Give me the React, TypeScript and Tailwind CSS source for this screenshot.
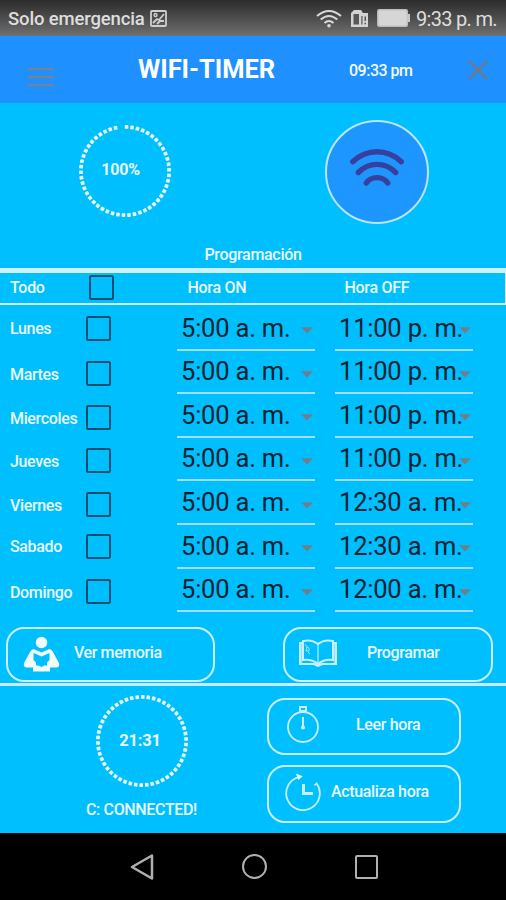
import React from "react";

const DAYS = [
  { name: "Lunes", row: "mt-[11px]", label: "pt-px", on: "5:00 a. m.", off: "11:00 p. m." },
  { name: "Martes", row: "mt-[20px]", label: "pt-[3px]", on: "5:00 a. m.", off: "11:00 p. m." },
  { name: "Miercoles", row: "mt-[19px]", label: "pt-[3px]", on: "5:00 a. m.", off: "11:00 p. m." },
  { name: "Jueves", row: "mt-[18px]", label: "pt-[3px]", on: "5:00 a. m.", off: "11:00 p. m." },
  { name: "Viernes", row: "mt-[18.5px]", label: "pt-[3px]", on: "5:00 a. m.", off: "12:30 a. m." },
  { name: "Sabado", row: "mt-[17.5px]", label: "pt-px", on: "5:00 a. m.", off: "12:30 a. m." },
  { name: "Domingo", row: "mt-[20px]", label: "pt-[3px]", on: "5:00 a. m.", off: "12:00 a. m." },
];

function DotRing({ label, labelClass, start, count }: { label: string; labelClass: string; start: number; count: number }) {
  return (
    <div className="grid h-[94px] w-[94px] place-items-center">
      <svg viewBox="0 0 94 94" className="col-start-1 row-start-1 h-[94px] w-[94px]">
        {Array.from({ length: count }, (_, i) => (
          <rect
            key={i}
            x="45.2"
            y="1"
            width="3.6"
            height="3.8"
            rx="0.6"
            fill="#e6f8ff"
            transform={`rotate(${start + i * 7.2} 47 47)`}
          />
        ))}
      </svg>
      <span className={`col-start-1 row-start-1 leading-none font-bold ${labelClass}`}>{label}</span>
    </div>
  );
}

function Check() {
  return <span className="block h-[25px] w-[25px] shrink-0 rounded-[2.5px] border-2 border-[#07506f]" />;
}

function TimeSelect({ value }: { value: string }) {
  return (
    <div className="flex h-[43.6px] w-[138px] items-center justify-between border-b-2 border-[#a5dcfb] pl-1 pr-[2px]">
      <span className="w-[118px] pt-px text-[25.5px] leading-none tracking-[-0.2px] whitespace-nowrap text-[#08222e]">{value}</span>
      <svg viewBox="0 0 12 7" className="mt-[6px] h-[7px] w-3 shrink-0">
        <path d="M0 0.3h12L6 6.6z" fill="#6f7f88" />
      </svg>
    </div>
  );
}

export default function App() {
  return (
    <div className="flex h-[900px] w-[506px] flex-col overflow-hidden bg-[#00bfff] font-[Roboto,sans-serif] text-[#e9f9ff]">
      <div className="flex h-9 shrink-0 items-center bg-linear-to-b from-[#2c2c2c] to-[#707070] pt-[2px] pl-2 text-[#dedede]">
        <span className="w-[142px] text-[18.5px] leading-none font-medium tracking-[-0.15px] whitespace-nowrap">Solo emergencia</span>
        <svg viewBox="0 0 17 17" className="mb-[2px] h-[17px] w-[17px]" fill="none" stroke="#cfcfcf" strokeWidth="1.8">
          <rect x="1" y="1" width="15" height="15" rx="1" />
          <path d="M3 13L7 9 9 10 14 4M7 14L10 11H14" />
          <circle cx="5.5" cy="5" r="1.5" strokeWidth="1.4" />
        </svg>
        <svg viewBox="0 0 26 19" className="mb-[2px] ml-[149px] h-[19px] w-[26px]" fill="none" stroke="#d8d8d8" strokeWidth="2.1">
          <path d="M1 7Q13-3 25 7M4.7 10.5Q13 3.5 21.3 10.5M8.5 14Q13 10 17.5 14" />
          <circle cx="13" cy="16.8" r="1.8" fill="#d8d8d8" stroke="none" />
        </svg>
        <svg viewBox="0 0 19 19" className="mb-[2px] ml-[8px] h-[19px] w-[19px]">
          <path d="M1 4L4 1H11L13 4H18V18H1z" fill="#d3d3d3" />
          <path d="M3.5 5H9V15.500H3.500zM11.300 7H12.500V15.500H11.300zM14.500 7.500H16V12H14.500zM14.500 13.700H16V15.300H14.500z" fill="#585858" />
        </svg>
        <svg viewBox="0 0 33 18" className="mb-[2px] ml-[8px] h-[18px] w-[33px]">
          <rect x="0.8" y="0.8" width="29.5" height="16.4" rx="1.5" fill="#d6d6d6" stroke="#bdbdbd" strokeWidth="1.5" />
          <path d="M30 5h3v8h-3z" fill="#c7c7c7" />
        </svg>
        <span className="ml-[6px] text-[20px] leading-none tracking-[-0.7px] whitespace-nowrap">9:33 p. m.</span>
      </div>

      <div className="flex h-[66.5px] shrink-0 items-center bg-[#1e90ff]">
        <svg viewBox="0 0 26 20" className="mt-[15px] ml-7 h-5 w-[26px]" stroke="#72839a" strokeWidth="2.5">
          <path d="M0 2H26M0 10H26M0 18H26" />
        </svg>
        <h1 className="ml-[84px] w-[137px] pt-px text-[25.500px] leading-none font-bold tracking-[-0.05px] whitespace-nowrap text-white">WIFI-TIMER</h1>
        <span className="ml-[74px] w-[64px] pt-[3px] text-[16px] leading-none font-medium tracking-[-0.5px] whitespace-nowrap text-[#f0faff]">09:33 pm</span>
        <svg viewBox="0 0 20 20" className="mt-px ml-[55px] h-5 w-5" stroke="#6c7b8b" strokeWidth="2.6">
          <path d="M1 1l18 18M19 1L1 19" />
        </svg>
      </div>

      <div className="flex h-[140.5px] shrink-0 items-start justify-between pt-[17px] pr-[77px] pl-[78px]">
        <div className="pt-[4.5px]">
          <DotRing label="100%" labelClass="text-[16px] tracking-[-0.2px] pr-[9px] pb-[2px]" start={2} count={49} />
        </div>
        <div className="flex h-[104px] w-[104px] items-center justify-center rounded-full border-2 border-[#b9e6ff] bg-[#1e96ff]">
          <svg viewBox="0 0 54 44" className="mb-[7px] h-[44px] w-[54px]" fill="none" stroke="#38409f" strokeWidth="5.4" strokeLinecap="round">
            <path d="M2.700 15.700C17 2.500 37 2.500 51.300 15.700M8.300 26.500C19 15.700 35 15.700 45.700 26.500M16.300 37C21 29.800 33 29.800 37.700 37" />
          </svg>
        </div>
      </div>

      <div className="flex h-[25px] shrink-0 items-start justify-center pt-[4px] text-[16px] leading-none font-medium tracking-[-0.3px]">Programación</div>
      <div className="flex h-[37px] shrink-0 items-center border-t-[5px] border-r-[1.5px] border-b-2 border-[#d1f0ff] pl-[10px] text-[16px] leading-none font-medium tracking-[-0.3px]">
        <span className="w-[79px]">Todo</span>
        <span className="pb-px"><Check /></span>
        <span className="ml-[73.500px] w-[157px]">Hora ON</span>
        <span>Hora OFF</span>
      </div>

      <div className="flex h-[322px] shrink-0">
        <div className="flex w-[177px] flex-col pl-[10px]">
          {DAYS.map((d) => (
            <div key={d.name} className={`flex h-[25px] shrink-0 items-center ${d.row}`}>
              <span className={`w-[76px] text-[16px] leading-none font-medium tracking-[-0.35px] whitespace-nowrap ${d.label}`}>{d.name}</span>
              <Check />
            </div>
          ))}
        </div>
        <div className="flex flex-col pt-[2px]">
          {DAYS.map((d) => (
            <TimeSelect key={d.name} value={d.on} />
          ))}
        </div>
        <div className="ml-5 flex flex-col pt-[2px]">
          {DAYS.map((d) => (
            <TimeSelect key={d.name} value={d.off} />
          ))}
        </div>
      </div>

      <div className="flex h-[58.500px] shrink-0 justify-between border-b-[3px] border-[#c5ecff] pr-[13px] pl-[6px] text-[16px] leading-none font-medium tracking-[-0.4px]">
        <div className="flex h-[55px] w-[209px] items-center rounded-[18px] border-2 border-[#c9efff] pl-[15px]">
          <svg viewBox="0 0 37 36" className="mb-[2px] h-9 w-[37px]" fill="#f0faff">
            <circle cx="18.500" cy="6.500" r="5.800" />
            <path d="M10.500 13L18.500 16.500 26.500 13Q29 13.500 30.500 17L36 27Q37 31.500 33 31.500H27V35.500H10V31.500H4Q0 31.500 1 27L6.500 17Q8 13.500 10.500 13z" />
            <path d="M10.500 17L18.500 20.500 26.500 17V24L24 26.500V29.500H21.500L18.500 31 15.500 29.500H13V26.500L10.500 24z" fill="#00bfff" />
          </svg>
          <span className="ml-[14px] pb-[3px]">Ver memoria</span>
        </div>
        <div className="flex h-[55px] w-[210px] items-center rounded-[18px] border-2 border-[#c9efff] pl-[14px]">
          <svg viewBox="0 0 38 28" className="mb-[3px] h-7 w-[38px]" fill="none" stroke="#c9efff" strokeWidth="1.6">
            <path d="M4 4H1V25H15L19 27 23 25H37V4H34M4 2Q13 0 19 5Q25 0 34 2V21Q25 20 19 25Q13 20 4 21z" strokeWidth="2" />
            <path d="M19 5V25M2.500 4V24M35.500 4V24" strokeOpacity="0.7" />
            <path d="M6 5L8 8 7 12H10V9L8 8M9 13L11 15" strokeWidth="0.8" />
          </svg>
          <span className="ml-[30px] pb-[3px]">Programar</span>
        </div>
      </div>

      <div className="flex h-[147.500px] shrink-0 text-[16px] leading-none font-medium tracking-[-0.35px]">
        <div className="flex w-[267px] flex-col items-center pt-[8.500px]">
          <div className="ml-[17px]">
            <DotRing label="21:31" labelClass="text-[16.5px] tracking-[-0.2px] pr-[4px]" start={1} count={50} />
          </div>
          <span className="mt-[14px] ml-4">C: CONNECTED!</span>
        </div>
        <div className="flex flex-col gap-[10px] pt-[12px]">
          <div className="flex h-[57.5px] w-[194px] items-center rounded-[18px] border-2 border-[#c9efff] pl-[17px]">
            <svg viewBox="0 0 34 38" className="mb-[4px] h-[38px] w-[34px]" fill="none" stroke="#c9efff" strokeWidth="1.8">
              <circle cx="17" cy="22" r="15" />
              <path d="M14 2H20V6H14zM17 12V22" strokeWidth="2" />
              <circle cx="17" cy="22.500" r="1.200" fill="#c9efff" />
            </svg>
            <span className="ml-[36px] pb-[3px]">Leer hora</span>
          </div>
          <div className="flex h-[57.500px] w-[194px] items-center rounded-[18px] border-2 border-[#c9efff] pl-[15px]">
            <svg viewBox="0 0 38 38" className="mb-[3px] h-[38px] w-[38px]" fill="none" stroke="#c9efff" strokeWidth="1.800">
              <path d="M15 4A16.800 16.800 0 1 0 32.500 10.300L30.500 12.500" />
              <path d="M13.500 2.200L17 3.500 14.800 5.500z" fill="#e9f9ff" stroke="#e9f9ff" />
              <path d="M19.500 11V20.500H29" strokeWidth="3" />
            </svg>
            <span className="ml-[9px] pb-[3px]">Actualiza hora</span>
          </div>
        </div>
      </div>

      <div className="flex flex-1 items-center justify-between bg-black pr-[128px] pl-[130px]">
        <svg viewBox="0 0 24 26" className="h-[26px] w-6" fill="none" stroke="#b0b0b0" strokeWidth="2.500">
          <path d="M2 13L22 1.500V24.500z" strokeLinejoin="round" />
        </svg>
        <span className="h-[25px] w-[25px] rounded-full border-[2.500px] border-[#b0b0b0]" />
        <span className="h-6 w-[23px] rounded-[2px] border-[2.500px] border-[#b0b0b0]" />
      </div>
    </div>
  );
}
